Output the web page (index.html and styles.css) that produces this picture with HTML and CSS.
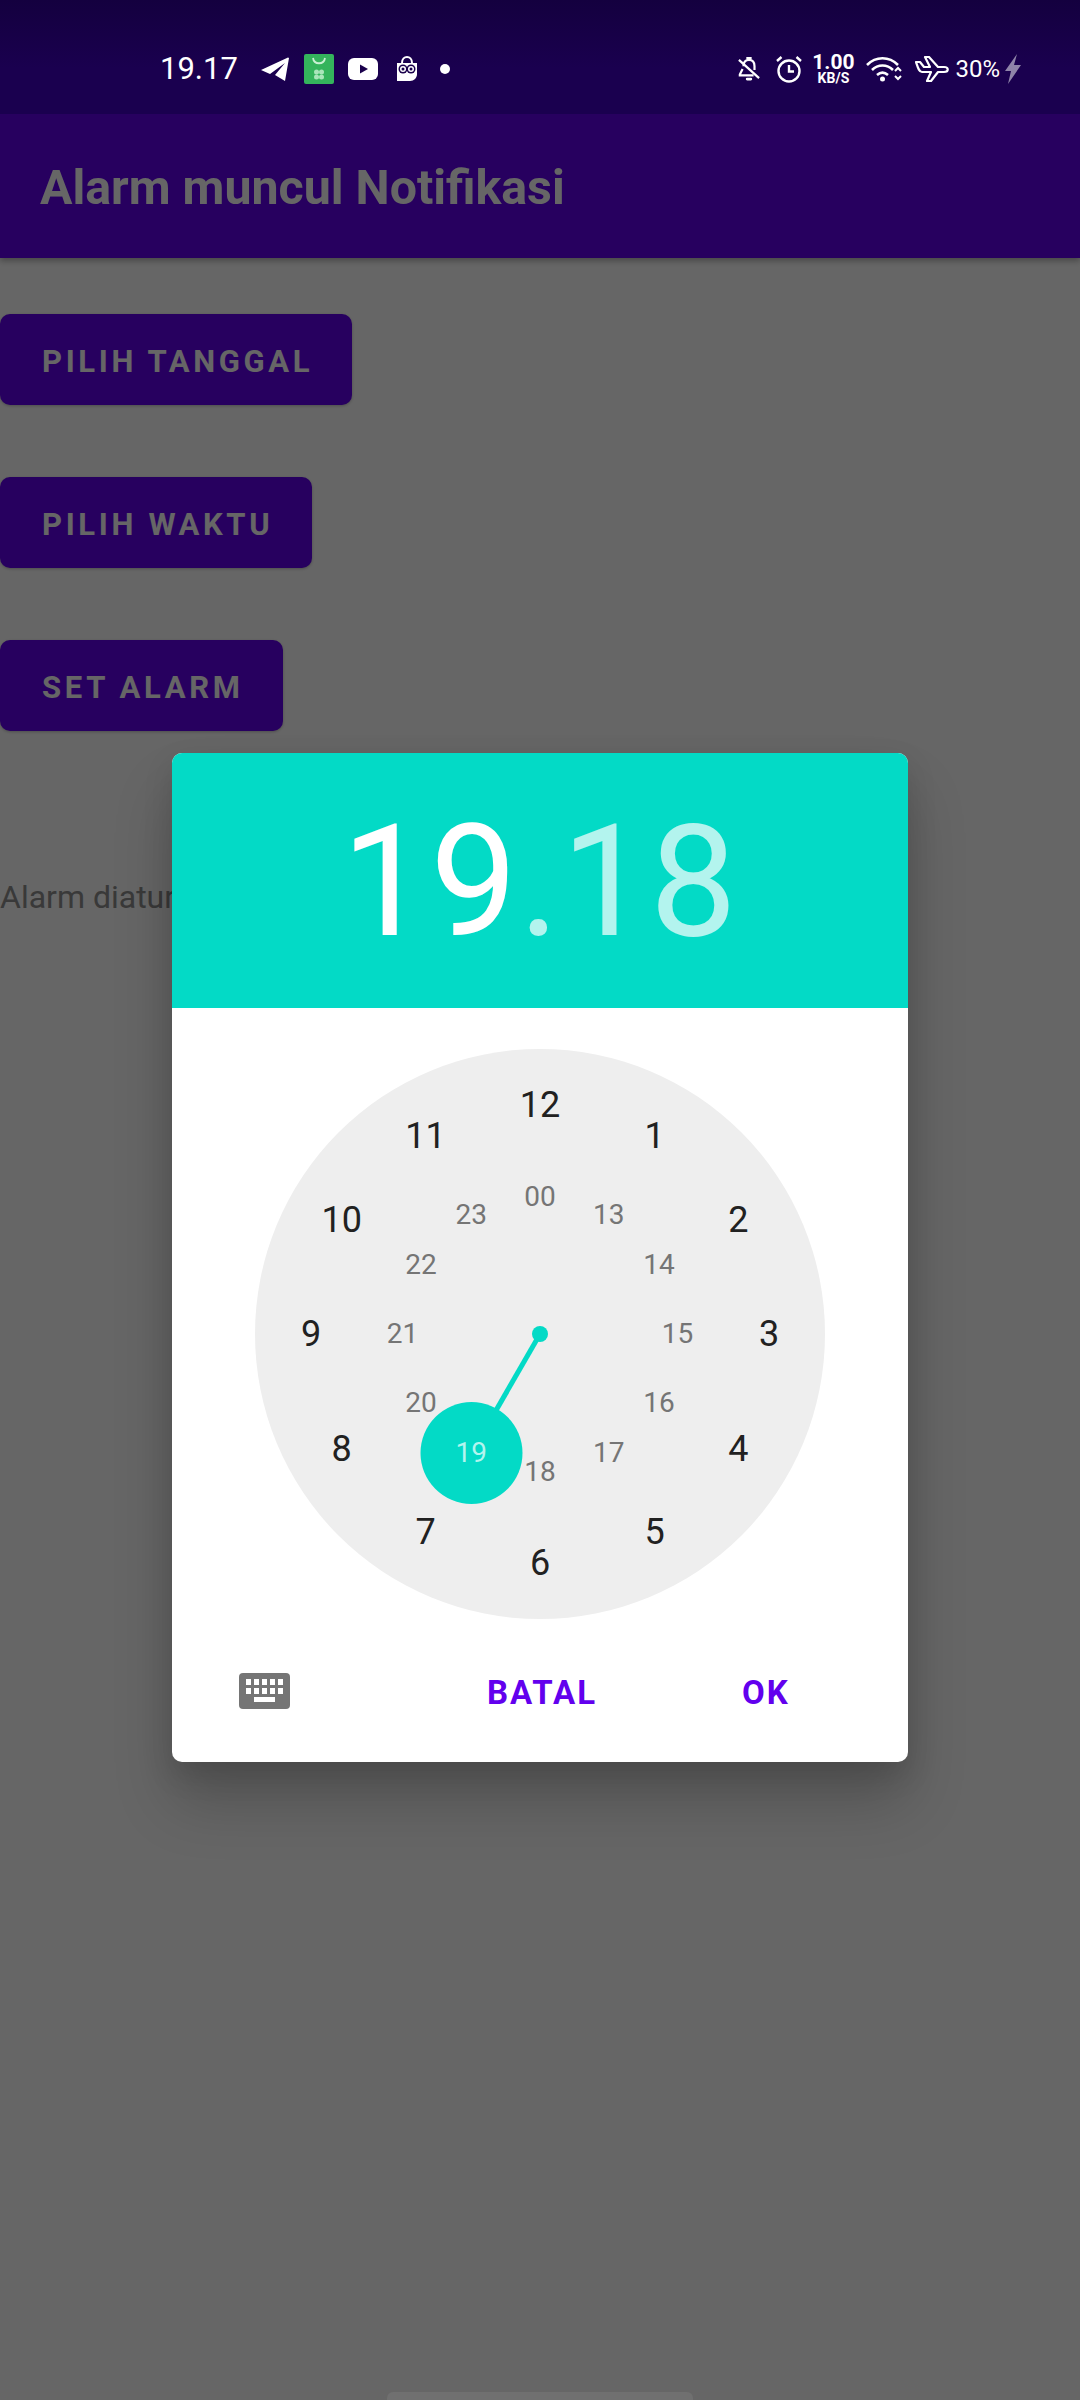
FILE: index.html
```html
<!DOCTYPE html>
<html lang="id">
<head>
    <meta charset="UTF-8">
    <title>Alarm muncul Notifikasi</title>
    <link rel="stylesheet" href="styles.css">
</head>
<body>
    <div class="status-bar">
        <span class="status-time">19.17</span>
        <svg class="ic-telegram" width="28" height="24" viewBox="0 0 28 24"><path fill="#fff" d="M0 13 27 0.5 28 1 24 24 14 18 24 6 9 17 Z"/></svg>
        <svg class="ic-bag" width="30" height="30" viewBox="0 0 30 30">
            <rect width="30" height="30" rx="2" fill="#34b45c"/>
            <path d="M9 4c1 7 11 7 12 0" fill="none" stroke="#c8f0d2" stroke-width="1.800"/>
            <g fill="#a9e6ba"><circle cx="12.500" cy="18" r="2.500"/><circle cx="17.500" cy="18" r="2.500"/><circle cx="12.500" cy="23" r="2.500"/><circle cx="17.500" cy="23" r="2.500"/></g>
        </svg>
        <svg class="ic-youtube" width="30" height="22" viewBox="0 0 30 22">
            <rect width="30" height="22" rx="6" fill="#fff"/>
            <path d="M12 6.500 20 11 12 15.500 Z" fill="#1a004c"/>
        </svg>
        <svg class="ic-owl" width="22" height="26" viewBox="0 0 22 26">
            <path d="M1 7h20v11c0 4-3 7-7 7H1Z" fill="#fff"/>
            <path d="M6 7c0-8 10-8 10 0" fill="none" stroke="#fff" stroke-width="2"/>
            <circle cx="7" cy="13" r="4.500" fill="#1a004c"/><circle cx="15" cy="13" r="4.500" fill="#1a004c"/>
            <circle cx="7" cy="13" r="3" fill="#fff"/><circle cx="15" cy="13" r="3" fill="#fff"/>
            <circle cx="7" cy="13" r="1.500" fill="#1a004c"/><circle cx="15" cy="13" r="1.500" fill="#1a004c"/>
        </svg>
        <span class="status-dot"></span>

        <div class="status-right">
            <svg class="ic-bell" width="22" height="28" viewBox="0 0 24 28" fill="none" stroke="#fff" stroke-width="2.400">
                <path d="M6 11c0-4 2-7 6-7s6 3 6 7v4M5 14l-3 6v1h15"/>
                <path d="M1 4 23 24"/>
                <path d="M10 2h4" stroke-linecap="round"/>
                <path d="M10 25h4" stroke-width="3" stroke-linecap="round"/>
            </svg>
            <svg class="ic-alarm" width="28" height="28" viewBox="0 0 28 28" fill="none" stroke="#fff" stroke-width="2.400">
                <circle cx="14" cy="16" r="10.500"/>
                <path d="M14 10v6.500h5"/>
                <path d="M2 6 6.500 2M26 6 21.500 2"/>
            </svg>
            <div class="status-speed"><span class="speed-value">1.00</span><span class="speed-unit">KB/S</span></div>
            <svg class="ic-wifi" width="36" height="26" viewBox="0 0 36 26" fill="none" stroke="#fff" stroke-width="2.600">
                <path d="M1 9c9-9 22-9 31 0"/>
                <path d="M6 14c6-6 15-6 21 0"/>
                <path d="M11 19c3.500-3 7.500-3 11 0"/>
                <circle cx="16.500" cy="23" r="2.500" fill="#fff" stroke="none"/>
                <path d="M29 15l3-3 3 3M29 20l3 3 3-3" stroke-width="2"/>
            </svg>
            <svg class="ic-plane" width="34" height="26" viewBox="0 0 34 26" fill="none" stroke="#fff" stroke-width="2.200" stroke-linejoin="round">
                <path d="M1 6h4l4 5h6L10 1h4l9 10h6c5 0 5 5 0 5H23l-7 9h-4l4-9H7C4 16 3 12 1 6Z"/>
            </svg>
            <span class="status-battery">30%</span>
            <svg class="ic-bolt" width="16" height="30" viewBox="0 0 16 30"><path fill="#8f84a9" d="M12 0 0 17h6L3 30 16 11h-7Z"/></svg>
        </div>
    </div>

    <header class="app-bar">Alarm muncul Notifikasi</header>

    <main class="content">
        <button class="btn btn-date">PILIH TANGGAL</button>
        <button class="btn btn-time">PILIH WAKTU</button>
        <button class="btn btn-set">SET ALARM</button>
        <p class="alarm-text">Alarm diatur</p>
    </main>

    <div class="scrim">
        <div class="dialog">
            <div class="dialog-head">
                <span class="head-hour">19</span><span class="head-minute">.18</span>
            </div>
            <div class="clock" id="clock">
                <svg class="clock-hand" width="570" height="570" viewBox="0 0 570 570">
                    <line x1="285" y1="285" x2="216.500" y2="404" stroke="#03dac6" stroke-width="5"/>
                    <circle cx="285" cy="285" r="8" fill="#03dac6"/>
                    <circle cx="216.500" cy="404" r="51" fill="#03dac6"/>
                </svg>
            </div>
            <div class="dialog-foot">
                <svg class="ic-keyboard" width="51" height="36" viewBox="0 0 51 36">
                    <rect width="51" height="36" rx="4" fill="#757575"/>
                    <path fill="#fff" d="M7 6h5v6H7ZM15 6h5v6h-5ZM23 6h5v6h-5ZM31 6h5v6h-5ZM39 6h5v6h-5ZM7 15h5v6H7ZM15 15h5v6h-5ZM23 15h5v6h-5ZM31 15h5v6h-5ZM39 15h5v6h-5ZM15 24h21v5H15Z"/>
                </svg>
                <button class="foot-btn foot-cancel">BATAL</button>
                <button class="foot-btn foot-ok">OK</button>
            </div>
        </div>
    </div>

    <div class="nav-handle"></div>

    <script src="clock.js"></script>
</body>
</html>
```

FILE: styles.css
```css
* {
    box-sizing: border-box;
}

html, body {
    margin: 0;
    height: 2400px;
    overflow: hidden;
}

body {
    font-family: Roboto, "Liberation Sans", sans-serif;
    background: #fff;
    position: relative;
}

/* status bar */
.status-bar {
    position: relative;
    z-index: 3;
    height: 114px;
    padding: 24px 59px 0 160px;
    display: flex;
    align-items: center;
    color: #fff;
    background: linear-gradient(180deg, #14003f, #1a004f 60%);
}

.status-time {
    font-size: 31px;
    width: 76px;
    margin-top: -2px;
    white-space: nowrap;
}

.ic-telegram { margin-left: 25px; }
.ic-bag { margin-left: 15px; }
.ic-youtube { margin-left: 14px; }
.ic-owl { margin-left: 18px; }

.status-dot {
    width: 10px;
    height: 10px;
    border-radius: 50%;
    background: #fff;
    margin-left: 22px;
}

.status-right {
    margin-left: auto;
    display: flex;
    align-items: center;
}

.ic-alarm { margin-left: 15px; }

.status-speed {
    display: flex;
    flex-direction: column;
    align-items: center;
    width: 40px;
    margin-left: 10px;
    font-weight: 700;
}

.speed-value {
    font-size: 21px;
    line-height: 19px;
}

.speed-unit {
    font-size: 14px;
    line-height: 13px;
}

.ic-wifi { margin-left: 13px; }
.ic-plane { margin-left: 13px; }

.status-battery {
    font-size: 24px;
    margin-left: 6px;
}

.ic-bolt { margin-left: 5px; }

/* app */
.app-bar {
    height: 144px;
    padding: 3px 0 0 40px;
    display: flex;
    align-items: center;
    background: #6200ee;
    color: #fff;
    font-size: 48.300px;
    font-weight: 700;
    box-shadow: 0 3px 6px rgba(0, 0, 0, 0.3);
}

.content {
    padding-top: 56px;
    display: flex;
    flex-direction: column;
    align-items: flex-start;
    gap: 72px;
}

.btn {
    height: 91px;
    padding: 3px 39px 0 42px;
    border: none;
    border-radius: 10px;
    background: #6200ee;
    color: #fff;
    font-family: inherit;
    font-size: 31px;
    font-weight: 700;
    letter-spacing: 3.650px;
    box-shadow: 0 1px 3px rgba(0, 0, 0, 0.25);
}

.alarm-text {
    margin: 75px 0 0;
    font-size: 32px;
    color: #8f8f8f;
}

/* dialog */
.scrim {
    position: absolute;
    top: 0;
    left: 0;
    width: 1080px;
    height: 2400px;
    z-index: 2;
    padding-top: 753px;
    background: rgba(0, 0, 0, 0.6);
}

.dialog {
    width: 736px;
    height: 1009px;
    margin: 0 auto;
    border-radius: 10px;
    overflow: hidden;
    background: #fff;
    box-shadow: 0 40px 60px rgba(0, 0, 0, 0.2), 0 12px 30px rgba(0, 0, 0, 0.12);
}

.dialog-head {
    height: 255px;
    padding-top: 3px;
    display: flex;
    align-items: center;
    justify-content: center;
    background: #03dac6;
    font-size: 155px;
    font-weight: 400;
    letter-spacing: 1.500px;
}

.head-hour { color: #fff; }
.head-minute { color: #b3f4ee; }

.clock {
    position: relative;
    width: 570px;
    height: 570px;
    margin: 41px auto 0;
    border-radius: 50%;
    background: #eee;
}

.clock-hand {
    position: absolute;
    left: 0;
    top: 0;
}

.clock-num {
    position: absolute;
    transform: translate(-50%, -49%);
    line-height: 1;
}

.clock-num.outer {
    font-size: 36px;
    color: #212121;
}

.clock-num.inner {
    font-size: 28px;
    color: #757575;
}

.clock-num.selected {
    color: #b3f4ee;
}

.dialog-foot {
    display: flex;
    align-items: center;
    height: 50px;
    margin-top: 47px;
    padding-left: 67px;
}

.foot-btn {
    border: none;
    padding: 3px 0 0;
    background: none;
    color: #6200ee;
    font-family: inherit;
    font-size: 33px;
    font-weight: 700;
    letter-spacing: 2px;
}

.foot-cancel { margin-left: 197px; }
.foot-ok { margin-left: 145px; }

.nav-handle {
    position: absolute;
    z-index: 3;
    left: 387px;
    bottom: 0;
    width: 306px;
    height: 8px;
    border-radius: 6px 6px 0 0;
    background: #707070;
}
```

FILE: clock.js
```js
// Menaruh angka jam di sekeliling lingkaran
const clock = document.getElementById('clock');
const center = 285;

function addNumber(label, hourPos, radius, className) {
    const angle = hourPos * Math.PI / 6;
    const span = document.createElement('span');
    span.className = 'clock-num ' + className;
    span.textContent = label;
    span.style.left = (center + radius * Math.sin(angle)) + 'px';
    span.style.top = (center - radius * Math.cos(angle)) + 'px';
    clock.appendChild(span);
}

for (let i = 1; i <= 12; i++) {
    addNumber(String(i), i, 229, 'outer');
}

for (let i = 0; i < 12; i++) {
    const label = i === 0 ? '00' : String(12 + i);
    addNumber(label, i, 137.5, label === '19' ? 'inner selected' : 'inner');
}
```
